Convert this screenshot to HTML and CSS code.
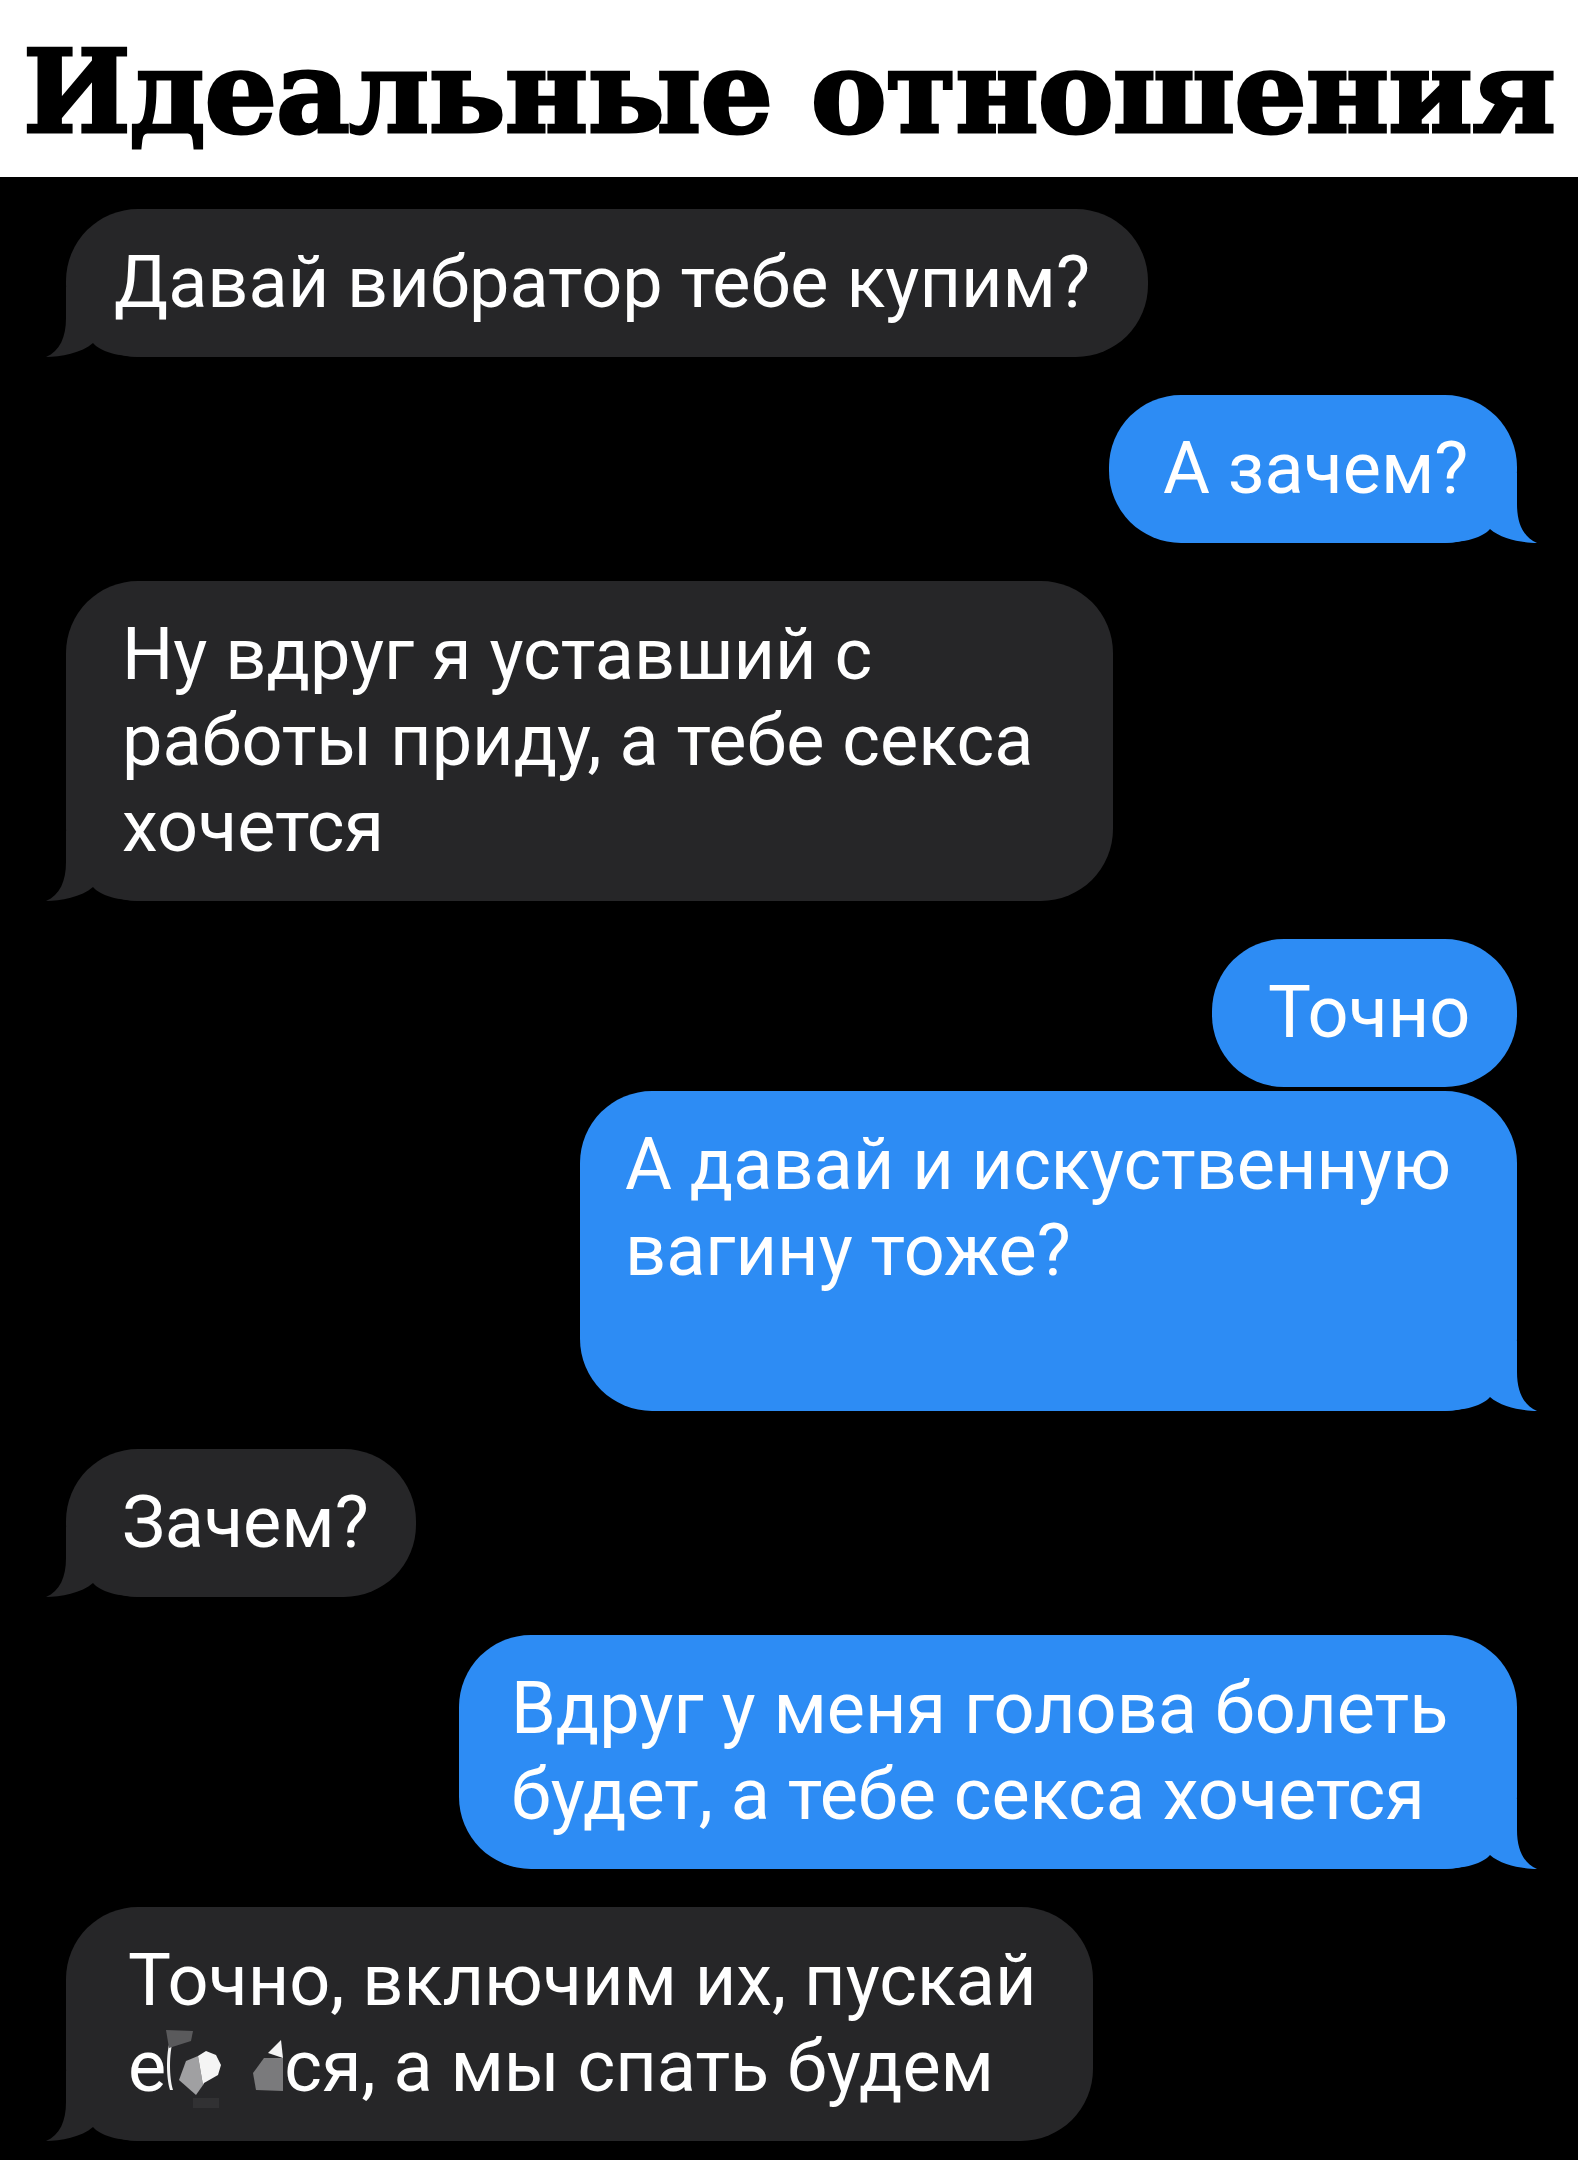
FILE: index.html
```html
<!DOCTYPE html>
<html lang="ru">
<head>
  <meta charset="UTF-8">
  <meta name="viewport" content="width=device-width, initial-scale=1.0">
  <title>Идеальные отношения</title>
  <link rel="stylesheet" href="styles.css">
</head>
<body>
  <header class="title-bar">
    <h1>Идеальные отношения</h1>
  </header>

  <main class="chat">
    <div class="msg in">
      <div class="bubble b-1">Давай вибратор тебе купим?
        <svg class="tail" viewBox="0 0 100 70"><path d="M0,0 L80,0 L80,31 C80,50 86,64 100,70 C86,70 64,66 53,56 C46,64 30,70 0,70 Z"/></svg>
      </div>
    </div>

    <div class="msg out">
      <div class="bubble b-2">А зачем?
        <svg class="tail" viewBox="0 0 100 70"><path d="M0,0 L80,0 L80,31 C80,50 86,64 100,70 C86,70 64,66 53,56 C46,64 30,70 0,70 Z"/></svg>
      </div>
    </div>

    <div class="msg in">
      <div class="bubble b-3">Ну вдруг я уставший с<br>работы приду, а тебе секса<br>хочется
        <svg class="tail" viewBox="0 0 100 70"><path d="M0,0 L80,0 L80,31 C80,50 86,64 100,70 C86,70 64,66 53,56 C46,64 30,70 0,70 Z"/></svg>
      </div>
    </div>

    <div class="msg out group">
      <div class="bubble b-4">Точно</div>
      <div class="bubble b-5">А давай и искуственную<br>вагину тоже?<br>&nbsp;
        <svg class="tail" viewBox="0 0 100 70"><path d="M0,0 L80,0 L80,31 C80,50 86,64 100,70 C86,70 64,66 53,56 C46,64 30,70 0,70 Z"/></svg>
      </div>
    </div>

    <div class="msg in">
      <div class="bubble b-6">Зачем?
        <svg class="tail" viewBox="0 0 100 70"><path d="M0,0 L80,0 L80,31 C80,50 86,64 100,70 C86,70 64,66 53,56 C46,64 30,70 0,70 Z"/></svg>
      </div>
    </div>

    <div class="msg out">
      <div class="bubble b-7">Вдруг у меня голова болеть<br>будет, а тебе секса хочется
        <svg class="tail" viewBox="0 0 100 70"><path d="M0,0 L80,0 L80,31 C80,50 86,64 100,70 C86,70 64,66 53,56 C46,64 30,70 0,70 Z"/></svg>
      </div>
    </div>

    <div class="msg in">
      <div class="bubble b-8">Точно, включим их, пускай<br>е<svg class="censor" viewBox="0 0 118 80">
          <path d="M4,13 C0,25 0,50 4,62 L7,62 C3,50 3,25 7,13 Z" fill="#f2f2f2"/>
          <polygon points="0,2 27,3 25,13 3,20" fill="#5a5a5c"/>
          <polygon points="20,33 32,28 37,57 30,67 13,52" fill="#a0a0a2"/>
          <polygon points="32,28 40,23 50,27 55,37 52,47 38,55 37,57" fill="#f4f4f4"/>
          <rect x="27" y="70" width="26" height="10" fill="#313133"/>
          <polygon points="115,12 102,25 117,30" fill="#f4f4f4"/>
          <polygon points="98,30 117,30 117,63 90,62 87,45" fill="#7a7a7c"/>
        </svg>ся, а мы спать будем
        <svg class="tail" viewBox="0 0 100 70"><path d="M0,0 L80,0 L80,31 C80,50 86,64 100,70 C86,70 64,66 53,56 C46,64 30,70 0,70 Z"/></svg>
      </div>
    </div>
  </main>
</body>
</html>
```

FILE: styles.css
```css
/* Page */
body {
  margin: 0;
  background: #000;
  font-family: Roboto, "Liberation Sans", sans-serif;
}

/* Title */
.title-bar {
  background: #fff;
  height: 177px;
  display: flex;
  align-items: center;
  justify-content: center;
}

.title-bar h1 {
  margin: 0;
  padding-top: 6px;
  font-family: "DejaVu Serif", serif;
  font-weight: bold;
  font-size: 114px;
  letter-spacing: -1px;
  color: #000;
  line-height: 1;
  -webkit-text-stroke: 3px #000;
}

/* Chat */
.chat {
  display: flex;
  flex-direction: column;
  gap: 38px;
  padding: 32px 61px 20px 66px;
}

.msg {
  display: flex;
  flex-direction: column;
}

.msg.in {
  align-items: flex-start;
}

.msg.out {
  align-items: flex-end;
}

.msg.group {
  gap: 4px;
}

.bubble {
  position: relative;
  z-index: 0;
  box-sizing: border-box;
  padding: 31px 50px;
  border-radius: 72px;
  font-size: 72px;
  line-height: 86px;
  color: #fff;
  white-space: nowrap;
}

.in .bubble {
  background: #262628;
}

.out .bubble {
  background: #2d8cf4;
}

.bubble .tail {
  position: absolute;
  z-index: -1;
  bottom: 0;
  width: 100px;
  height: 70px;
}

.out .tail {
  right: -20px;
  fill: #2d8cf4;
}

.in .tail {
  left: -20px;
  fill: #262628;
  transform: scaleX(-1);
}

/* Widths of each bubble, as in the conversation */
.b-1 { width: 1082px; padding-left: 48px; }
.b-2 { width: 408px; padding-left: 54px; }
.b-3 { width: 1047px; padding-left: 56px; }
.b-4 { width: 305px; padding-left: 56px; }
.b-5 { width: 937px; padding-left: 45px; }
.b-6 { width: 350px; padding-left: 56px; }
.b-7 { width: 1058px; padding-left: 52px; }
.b-8 { width: 1027px; padding-left: 62px; }

.censor {
  display: inline-block;
  width: 118px;
  height: 80px;
  vertical-align: -17px;
}
```
